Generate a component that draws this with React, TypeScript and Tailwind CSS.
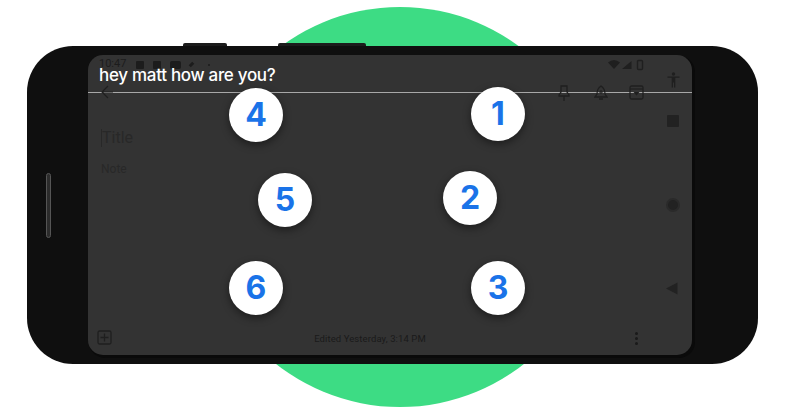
import React from "react";

const Dot = ({ n, cls }: { n: string; cls: string }) => (
  <div className={`absolute w-[54px] h-[54px] rounded-full bg-white flex items-center justify-center text-[#1a73e8] text-[32px] font-bold font-['Inter',sans-serif] shadow-[0_3px_8px_rgba(0,0,0,0.45)] ${cls}`}>
    {n}
  </div>
);

const ic = "#1f1f1f";

export default function App() {
  return (
    <div className="relative w-[800px] h-[414px] overflow-hidden bg-white pl-[27px] pt-[46px] font-['Roboto',sans-serif]">
      {/* green disc behind the phone */}
      <div className="absolute left-[200px] top-[7px] w-[400px] h-[400px] rounded-full bg-[#3ddc84]" />
      {/* hardware buttons */}
      <div className="absolute left-[183px] top-[43px] w-[44px] h-[4px] rounded-t-[2px] bg-[#1c1c1c]" />
      <div className="absolute left-[278px] top-[43px] w-[88px] h-[4px] rounded-t-[2px] bg-[#1c1c1c]" />

      <div className="relative flex w-[731px] h-[318px] rounded-[46px] bg-[#0f0f0f] pl-[61px] pt-[9px]">
        {/* side slot */}
        <div className="absolute left-[19px] top-[127px] w-[5px] h-[65px] rounded-[3px] bg-[#2c2c2c] border border-[#555]" />

        <div className="flex flex-col w-[604px] h-[300px] rounded-[15px] bg-[#333333] shadow-[2px_2px_0_1px_#0a0a0a]">
          {/* header */}
          <div className="relative h-[38px] shrink-0 border-b border-[#a8a8a8] pl-[11px]">
            <div className="flex items-center gap-[9px] h-[16px] pt-[3px] text-[11px] text-[#1c1c1c]">
              <span>10:47</span>
              <span className="w-[8px] h-[8px] ml-[1px] bg-[#1c1c1c] rounded-[1px]" />
              <span className="w-[8px] h-[8px] bg-[#1c1c1c] rounded-[1px]" />
              <span className="w-[11px] h-[8px] bg-[#1c1c1c] rounded-[2px]" />
              <span className="w-[3px] h-[5px] bg-[#1c1c1c] rotate-45" />
              <span className="w-[2px] h-[2px] ml-[6px] bg-[#1c1c1c] rounded-full" />
            </div>
            <div className="absolute left-[11px] top-[9px] text-white text-[17px] leading-[22px] font-['Inter',sans-serif] font-medium tracking-[-0.3px] whitespace-nowrap">
              hey matt how are you?
            </div>
            {/* status icons */}
            <svg className="absolute left-[520px] top-[4px]" width="38" height="12" viewBox="0 0 38 12">
              <path d="M0 3.5 Q6-1.5 12 3.5 L6 10Z" fill={ic} />
              <path d="M14 10 L23.5 2 V10Z" fill={ic} />
              <rect x="29.5" y="1.5" width="5" height="9" rx="1" fill="none" stroke={ic} strokeWidth="1.4" />
            </svg>
            {/* back arrow */}
            <svg className="absolute left-[13px] top-[30px]" width="12" height="14" viewBox="0 0 12 14">
              <path d="M7 1 L1 7 L7 13 M1 7 H12" fill="none" stroke={ic} strokeWidth="1.2" />
            </svg>
            {/* pin */}
            <svg className="absolute left-[470px] top-[30px]" width="12" height="17" viewBox="0 0 12 17">
              <path d="M3 1 H9 V7 L11 10 V11 H1 V10 L3 7Z M6 11 V16" fill="none" stroke={ic} strokeWidth="1.3" />
            </svg>
            {/* bell */}
            <svg className="absolute left-[506px] top-[30px]" width="14" height="17" viewBox="0 0 14 17">
              <path d="M7 1 C4 3 3 5 3 9 L1 12 H13 L11 9 C11 5 10 3 7 1Z M5 14 H9" fill="none" stroke={ic} strokeWidth="1.3" />
              <path d="M5 7 H9 M7 5 V9" stroke={ic} strokeWidth="1" />
            </svg>
            {/* archive */}
            <svg className="absolute left-[541px] top-[30px]" width="15" height="15" viewBox="0 0 15 15">
              <rect x="1" y="1" width="13" height="13" rx="1.5" fill="none" stroke={ic} strokeWidth="1.3" />
              <path d="M1 4 H14" stroke={ic} strokeWidth="1.3" />
              <path d="M4.5 7 H10.5 L7.5 10.5Z" fill={ic} />
            </svg>
          </div>

          {/* body */}
          <div className="flex-1 flex flex-col pl-[13px] pt-[34px]">
            <div className="flex items-center h-[22px] text-[16px] text-[#282828]">
              <span className="w-px h-[18px] bg-[#282828]" />
              Title
            </div>
            <div className="mt-[12px] text-[12px] leading-[16px] text-[#282828]">Note</div>
          </div>

          {/* footer */}
          <div className="relative flex items-center justify-center h-[30px] shrink-0 pb-[3px] pr-[40px] text-[9.5px] tracking-[0.1px] text-[#1a1a1a]">
            <svg className="absolute left-[9px] top-[5px]" width="15" height="15" viewBox="0 0 15 15">
              <rect x="1" y="1" width="13" height="13" rx="1.5" fill="none" stroke={ic} strokeWidth="1.3" />
              <path d="M3.5 7.5 H11.5 M7.5 3.5 V11.5" stroke={ic} strokeWidth="1.3" />
            </svg>
            <span className="mt-[2px]">Edited Yesterday, 3:14 PM</span>
            <div className="absolute left-[547px] top-[7px] flex flex-col gap-[2px]">
              <span className="w-[3px] h-[3px] rounded-full bg-[#1a1a1a]" />
              <span className="w-[3px] h-[3px] rounded-full bg-[#1a1a1a]" />
              <span className="w-[3px] h-[3px] rounded-full bg-[#1a1a1a]" />
            </div>
          </div>
        </div>

        {/* nav icons on the right bezel of the screen */}
        <svg className="absolute left-[640px] top-[26px]" width="13" height="16" viewBox="0 0 13 16">
          <circle cx="6.5" cy="2" r="1.7" fill={ic} />
          <path d="M0.5 4.5 H12.5 V5.8 H8.3 V15.5 H7 V10.5 H6 V15.5 H4.7 V5.8 H0.5Z" fill={ic} />
        </svg>
        <div className="absolute left-[640px] top-[69px] w-[12px] h-[12px] rounded-[1px] bg-[#222]" />
        <div className="absolute left-[639px] top-[152px] w-[14px] h-[14px] rounded-full bg-[#222] border-[2px] border-[#2a2a2a]" />
        <svg className="absolute left-[639px] top-[236px]" width="12" height="13" viewBox="0 0 12 13">
          <path d="M0 6.5 L11.5 0.5 V12.5Z" fill="#222" />
        </svg>
      </div>

      <Dot n="1" cls="left-[471px] top-[87px]" />
      <Dot n="2" cls="left-[443px] top-[171px]" />
      <Dot n="3" cls="left-[471px] top-[261px]" />
      <Dot n="4" cls="left-[229px] top-[88px]" />
      <Dot n="5" cls="left-[258px] top-[173px]" />
      <Dot n="6" cls="left-[229px] top-[261px]" />
    </div>
  );
}
